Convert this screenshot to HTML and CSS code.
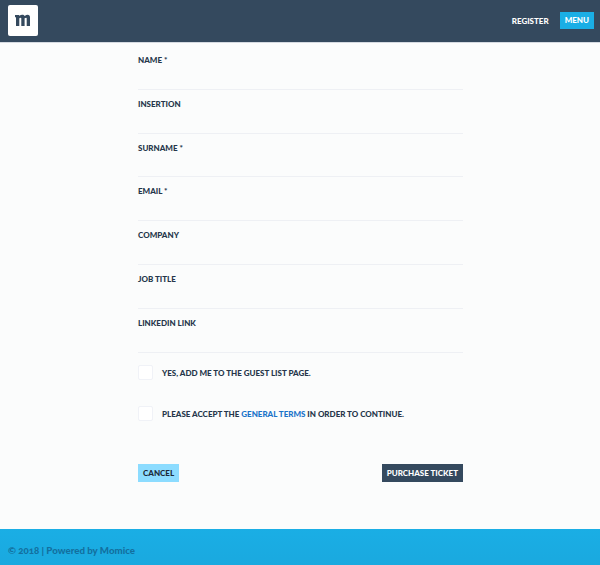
FILE: index.html
```html
<!DOCTYPE html>
<html lang="en">

<head>
    <meta charset="UTF-8" />
    <title>Purchase ticket</title>
    <link rel="stylesheet" href="styles.css">
</head>

<body>
    <header class="topbar">
        <a class="logo" href="#" aria-label="Momice">
            <svg class="logo-mark" width="30" height="31" viewBox="0 0 30 31">
                <path d="M7 10h4.3v1c.9-.9 1.9-1.3 2.9-1.3 1.2 0 2 .5 2.5 1.3 1-.9 2-1.3 3-1.3 1.5 0 2.3 1 2.3 2.8V21h-3.3v-7.5c0-.5-.2-.7-.6-.7-.4 0-1 .2-1.5.5V21h-3.3v-7.5c0-.5-.2-.7-.6-.7-.4 0-1 .2-1.4.5V21H8v-8.8H7z" />
            </svg>
        </a>
        <nav class="topnav">
            <a class="topnav-link" href="#">Register</a>
            <a class="topnav-menu" href="#">Menu</a>
        </nav>
    </header>

    <main class="content">
        <form class="ticket-form">
            <div class="form-group"><label for="name">Name *</label><input type="text" id="name"></div>
            <div class="form-group"><label for="insertion">Insertion</label><input type="text" id="insertion"></div>
            <div class="form-group"><label for="surname">Surname *</label><input type="text" id="surname"></div>
            <div class="form-group"><label for="email">Email *</label><input type="text" id="email"></div>
            <div class="form-group"><label for="company">Company</label><input type="text" id="company"></div>
            <div class="form-group"><label for="job">Job title</label><input type="text" id="job"></div>
            <div class="form-group"><label for="linkedin">LinkedIn link</label><input type="text" id="linkedin"></div>

            <div class="check-row">
                <span class="checkbox"></span>
                <span class="check-label">Yes, add me to the guest list page.</span>
            </div>
            <div class="check-row">
                <span class="checkbox"></span>
                <span class="check-label">Please accept the <a href="#">general terms</a> in order to continue.</span>
            </div>

            <div class="actions">
                <a class="btn btn-cancel" href="#">Cancel</a>
                <a class="btn btn-purchase" href="#">Purchase ticket</a>
            </div>
        </form>
    </main>

    <footer class="footer">© 2018 | Powered by Momice</footer>
</body>

</html>
```

FILE: styles.css
```css
* {
    box-sizing: border-box;
}

body {
    margin: 0;
    height: 565px;
    display: flex;
    flex-direction: column;
    font-family: Lato, sans-serif;
    font-weight: 900;
    background: #fbfcfc;
    color: #25364a;
}

a {
    text-decoration: none;
}

.topbar {
    height: 43px;
    display: flex;
    align-items: flex-start;
    justify-content: space-between;
    padding: 5px 6px 0 8px;
    background: #34495e;
    border-bottom: 1px solid #d5dae1;
}

.logo {
    width: 30px;
    height: 31px;
    background: #fff;
    border-radius: 2px;
}

.logo-mark {
    display: block;
    fill: #34495e;
}

.topnav {
    display: flex;
    align-items: center;
    gap: 11px;
    margin-top: 7px;
    font-size: 8px;
    text-transform: uppercase;
    color: #fff;
}

.topnav a {
    color: #fff;
}

.topnav-menu {
    padding: 3px 5px;
    line-height: 11px;
    background: #1aaee5;
}

.content {
    flex: 1;
}

.ticket-form {
    width: 325px;
    margin-left: 138px;
    padding-top: 3px;
}

.form-group {
    height: 43.8px;
    display: flex;
    flex-direction: column;
    padding-top: 8px;
    border-bottom: 1px solid #eef0f4;
}

.form-group label {
    font-size: 8px;
    line-height: 12px;
    text-transform: uppercase;
}

.form-group input {
    border: none;
    background: transparent;
    outline: none;
}

.check-row {
    display: flex;
    align-items: center;
    gap: 9px;
    height: 15px;
    margin-top: 26px;
    font-size: 8px;
    text-transform: uppercase;
}

.form-group + .check-row {
    margin-top: 12px;
}

.check-label {
    padding-top: 1px;
}

.check-row a {
    color: #1a73c9;
}

.checkbox {
    width: 15px;
    height: 15px;
    background: #fff;
    border: 1px solid #f0f2f7;
    border-radius: 2px;
}

.actions {
    display: flex;
    justify-content: space-between;
    margin-top: 43px;
}

.btn {
    height: 18px;
    padding: 0 5px;
    line-height: 18px;
    font-size: 8px;
    text-transform: uppercase;
}

.btn-cancel {
    background: #8cdcff;
    color: #1c2b3a;
}

.btn-purchase {
    background: #34495e;
    color: #fff;
}

.footer {
    height: 36px;
    padding: 15px 8px 0;
    background: linear-gradient(#1aaee5, #1aa9df);
    color: #13709f;
    font-size: 9.7px;
    line-height: 13px;
    font-variant-numeric: oldstyle-nums;
}
```
